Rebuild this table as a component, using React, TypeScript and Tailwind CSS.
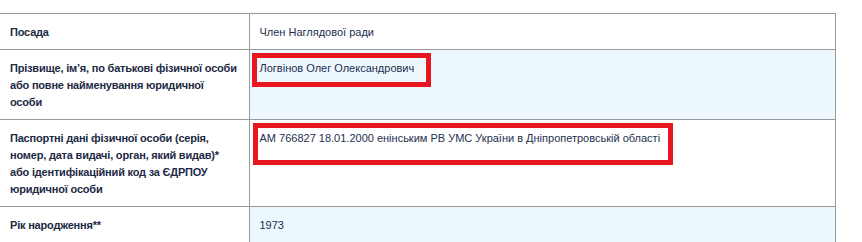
const rows = [
  {
    label: ["Посада"],
    value: "Член Наглядової ради",
    shaded: false,
  },
  {
    label: ["Прізвище, ім’я, по батькові фізичної особи", "або повне найменування юридичної", "особи"],
    value: "Логвінов Олег Олександрович",
    shaded: true,
    mark: "left-[2px] top-[3px] w-[179px] h-[34px]",
  },
  {
    label: [
      "Паспортні дані фізичної особи (серія,",
      "номер, дата видачі, орган, який видав)*",
      "або ідентифікаційний код за ЄДРПОУ",
      "юридичної особи",
    ],
    value: "АМ 766827 18.01.2000 енінським РВ УМС України в Дніпропетровській області",
    shaded: false,
    mark: "left-[3px] top-[3px] w-[420px] h-[42px]",
  },
  {
    label: ["Рік народження**"],
    value: "1973",
    shaded: true,
  },
];

export default function App() {
  return (
    <div className="w-[862px] h-[242px] overflow-hidden bg-white pt-[13px] font-['Liberation_Sans',Arial,sans-serif] text-[11px] leading-[17px]">
      <table className="w-[836px] border-collapse table-fixed">
        <colgroup>
          <col className="w-[249px]" />
          <col />
        </colgroup>
        <tbody>
          {rows.map((r, i) => (
            <tr key={i} className="border-t border-[#9a9a9a]">
              <td className="align-top pl-[10px] pr-[2px] pt-[10px] pb-[8px] font-bold tracking-[-0.2px] text-[#1c2a44] border-r border-[#9a9a9a]">
                {r.label.map((line, j) => (
                  <div key={j} className="whitespace-nowrap">
                    {line}
                  </div>
                ))}
              </td>
              <td
                className={
                  "relative align-top pl-[10px] pr-[9px] pt-[10px] pb-[8px] text-[#1d3050] border-r border-[#9a9a9a] " +
                  (r.shaded ? "bg-[#edf7fe]" : "bg-white")
                }
              >
                {r.value}
                {r.mark && (
                  <div className={"absolute border-[5px] border-[#e8161f] " + r.mark} />
                )}
              </td>
            </tr>
          ))}
        </tbody>
      </table>
    </div>
  );
}
